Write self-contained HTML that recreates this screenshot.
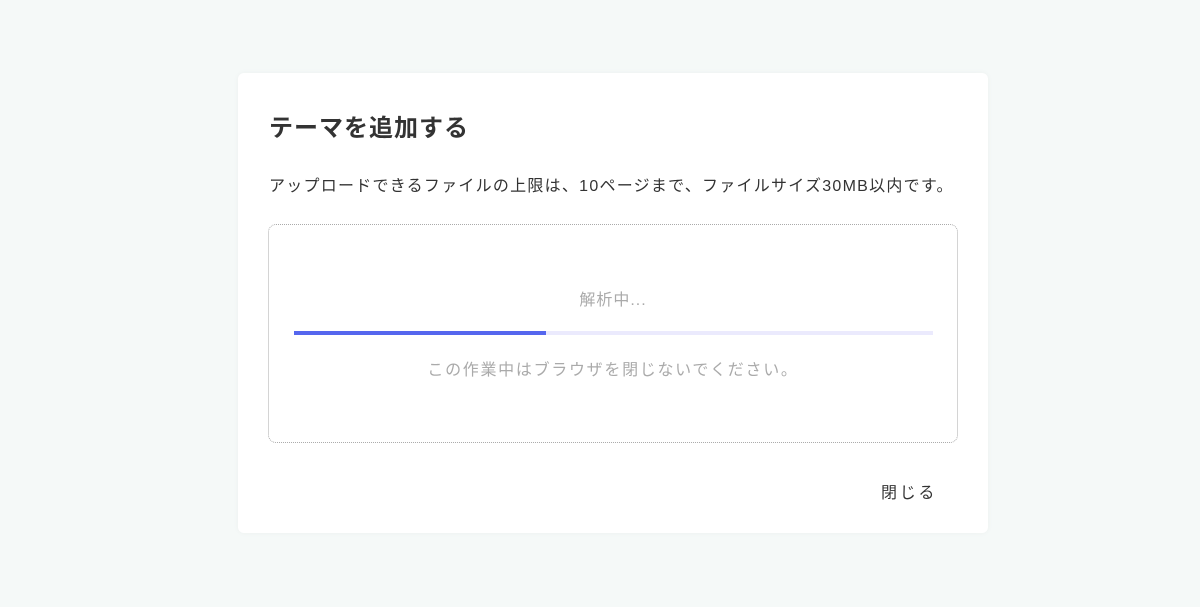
<!DOCTYPE html>
<html><head><meta charset="utf-8"><style>
body{margin:0;width:1200px;height:607px;background:#f5f9f8;font-family:"Liberation Sans","Noto Sans CJK JP",sans-serif;position:relative;overflow:hidden}
.card{position:absolute;left:238px;top:73px;width:750px;height:460px;background:#fff;border-radius:6px;box-shadow:0 0 6px rgba(0,0,0,0.04)}
.t{position:absolute;left:31px;top:39px;font-size:24px;font-weight:bold;color:#333;line-height:34px;letter-spacing:1px}
.d{position:absolute;left:31px;top:102px;font-size:16px;color:#333;line-height:24px;letter-spacing:1.25px;white-space:nowrap}
.box{position:absolute;left:30px;top:151px;width:688px;height:217px;border:1px dotted #aaa;border-radius:8px}
.a{position:absolute;left:0;right:0;top:64px;text-align:center;font-size:16px;color:#aaa;line-height:24px;letter-spacing:1px}
.bar{position:absolute;left:25px;top:106px;width:639px;height:4px;background:#ebeafd}
.bar i{position:absolute;left:0;top:0;height:4px;width:252px;background:#5566ee}
.s{position:absolute;left:0;right:0;top:134px;text-align:center;font-size:16px;color:#aaa;line-height:24px;letter-spacing:1.7px}
.c{position:absolute;left:643px;top:409px;font-size:16px;color:#333;line-height:24px;letter-spacing:2.7px}
</style></head><body>
<div class="card">
<div class="t">テーマを追加する</div>
<div class="d">アップロードできるファイルの上限は、10ページまで、ファイルサイズ30MB以内です。</div>
<div class="box">
<div class="a">解析中...</div>
<div class="bar"><i></i></div>
<div class="s">この作業中はブラウザを閉じないでください。</div>
</div>
<div class="c">閉じる</div>
</div>
</body></html>
